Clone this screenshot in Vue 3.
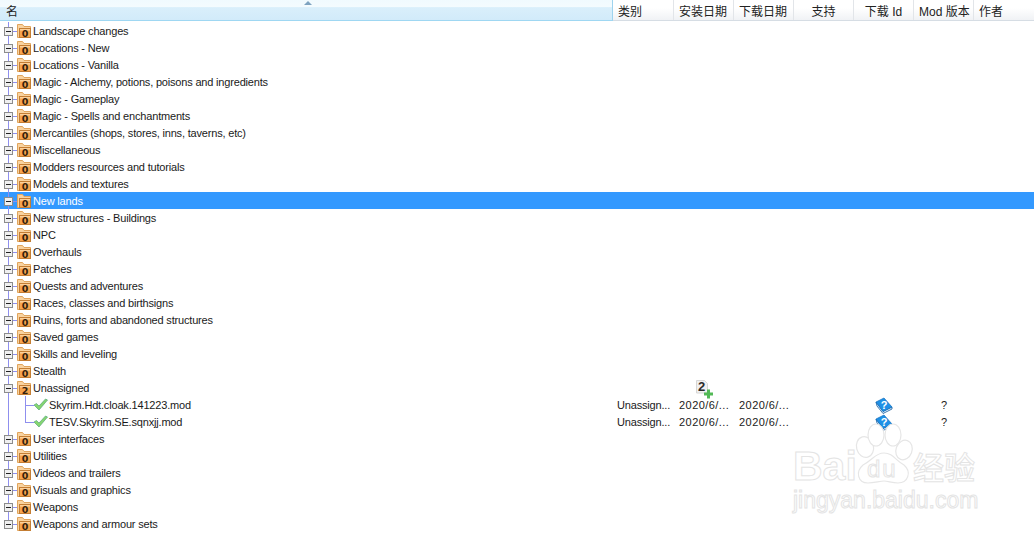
<script setup>
const names = ['Landscape changes','Locations - New','Locations - Vanilla','Magic - Alchemy, potions, poisons and ingredients','Magic - Gameplay','Magic - Spells and enchantments','Mercantiles (shops, stores, inns, taverns, etc)','Miscellaneous','Modders resources and tutorials','Models and textures','New lands','New structures - Buildings','NPC','Overhauls','Patches','Quests and adventures','Races, classes and birthsigns','Ruins, forts and abandoned structures','Saved games','Skills and leveling','Stealth','Unassigned','Skyrim.Hdt.cloak.141223.mod','TESV.Skyrim.SE.sqnxjj.mod','User interfaces','Utilities','Videos and trailers','Visuals and graphics','Weapons','Weapons and armour sets']
const mods = [22, 23]
const rows = names.map((name, i) => ({
  name,
  mod: mods.includes(i),
  lastMod: i === 23,
  selected: name === 'New lands',
  count: name === 'Unassigned' ? '2' : '0',
  addIcon: name === 'Unassigned',
  last: i === names.length - 1
}))
const cols = [
  { t: '类别', c: 'left' }, { t: '安装日期', c: 'left' }, { t: '下载日期', c: 'left' },
  { t: '支持', c: 'mid' }, { t: '下载 Id', c: 'mid' }, { t: 'Mod 版本', c: 'left' }, { t: '作者', c: 'left' }
]
</script>

<template>
  <div class="app">
    <div class="header">
      <div class="h-name">
        <span class="sort"></span>
        <span class="h-label">名</span>
      </div>
      <div v-for="col in cols" :key="col.t" class="h-col" :class="col.c">{{ col.t }}</div>
    </div>
    <div class="tree">
      <div v-for="r in rows" :key="r.name" class="row" :class="{ selected: r.selected, mod: r.mod }">
        <div class="name-cell">
          <template v-if="!r.mod">
            <span class="vline" :class="{ end: r.last }"></span>
            <span class="hline"></span>
            <span class="expander"></span>
            <svg class="folder" width="14" height="14" viewBox="0 0 14 14">
              <path d="M0.500 13.500V0.500h5l1.500 2h6.500v3H2.500v8z" fill="#f9d3a0" stroke="#e0a45c" />
              <rect x="2.500" y="4.500" width="11" height="9" fill="#f7a44e" stroke="#c47e34" />
              <rect x="3" y="5" width="10" height="1.500" fill="#fcd09a" />
              <text x="8" y="12.700" class="badge" text-anchor="middle">{{ r.count }}</text>
            </svg>
            <span class="label">{{ r.name }}</span>
          </template>
          <template v-else>
            <span class="vline"></span>
            <span class="mod-v" :class="{ end: r.lastMod }"></span>
            <span class="mod-h"></span>
            <svg class="check" width="15" height="13" viewBox="0 0 15 13">
              <path d="M1 7 L3.500 5.500 L6 8 L12.500 1 L14.500 2 L6 12 Z" fill="#86d66e" stroke="#62ad82" stroke-width="0.800" stroke-linejoin="round" />
            </svg>
            <span class="label mod-label">{{ r.name }}</span>
          </template>
        </div>
        <template v-if="r.mod">
          <div class="cell first">Unassign...</div>
          <div class="cell date">2020/6/...</div>
          <div class="cell date">2020/6/...</div>
          <div class="cell"></div>
          <div class="cell center">
            <svg width="18" height="17" viewBox="0 0 18 17">
              <path d="M1 5 L2 9 L8 16.500 L17 12 L17 10 L8 14.500 Z" fill="#e8f2fb" stroke="#0f5aa0" stroke-width="0.800" />
              <path d="M1 5 L9 1 L17 10 L8 14.500 Z" fill="#1e90e6" stroke="#1670bd" stroke-width="0.700" />
              <text x="9" y="11.500" class="q" text-anchor="middle">?</text>
            </svg>
          </div>
          <div class="cell center qmark">?</div>
          <div class="cell"></div>
        </template>
        <template v-else-if="r.addIcon">
          <div class="cell first"></div>
          <div class="cell add">
            <svg width="17" height="19" viewBox="0 0 17 19">
              <path d="M0.500 0.500h8l3 3v9.500h-11z" fill="#f0f0f0" stroke="#d6d6d6" />
              <text x="5.500" y="11" class="two" text-anchor="middle">2</text>
              <path d="M11 9.500h3v3h3v3h-3v3h-3v-3h-3v-3h3z" fill="#52b956" />
            </svg>
          </div>
        </template>
      </div>
    </div>
    <div class="watermark">
      <svg class="paw" width="64" height="66" viewBox="0 0 64 66">
        <g fill="#fff" stroke="#e6e6e6" stroke-width="1.200">
          <ellipse cx="13" cy="27" rx="8.500" ry="10.500" transform="rotate(-15 13 27)" />
          <ellipse cx="24" cy="15" rx="8" ry="11" />
          <ellipse cx="41" cy="15" rx="8" ry="11" />
          <ellipse cx="52" cy="30" rx="8" ry="10" transform="rotate(20 52 30)" />
          <path d="M32 33 C41 33 43 40 52 45 C60 52 56 63 46 63 C40 63 36 61 32 61 C28 61 22 63 16 63 C6 63 3 52 11 45 C21 40 23 33 32 33 Z" />
        </g>
      </svg>
      <div class="wm-top"><span class="wm-bai">Bai</span><span class="wm-du">du</span><span class="wm-cn">经验</span></div>
      <div class="wm-sub">jingyan.baidu.com</div>
    </div>
  </div>
</template>

<style>
html, body { margin: 0; background: #fff; }
</style>

<style scoped>
.app {
  position: relative;
  width: 1034px;
  height: 534px;
  overflow: hidden;
  background: #fff;
  font-family: "Liberation Sans", "Noto Sans CJK SC", sans-serif;
  font-size: 11px;
  letter-spacing: -0.18px;
  color: #1a1a1a;
}
.header {
  display: flex;
  height: 21px;
  box-sizing: border-box;
  border-bottom: 1px solid #d6dde4;
  background: linear-gradient(#fff 0, #fff 40%, #f0f2f5 100%);
  font-family: "Liberation Sans", "Noto Sans CJK SC", sans-serif;
  font-size: 12px;
  letter-spacing: 0;
  line-height: 24px;
  color: #222;
}
.h-name {
  position: relative;
  width: 613px;
  height: 21px;
  box-sizing: border-box;
  flex: none;
  padding-left: 6px;
  background: linear-gradient(#f0fafe 0, #f4fbfe 34%, #d9effb 38%, #d2ebfa 100%);
  border-right: 1px solid #9ed3ee;
  border-bottom: 1px solid #9fd7f2;
}
.sort {
  position: absolute;
  left: 304px;
  top: 1px;
  width: 0;
  height: 0;
  border-left: 4px solid transparent;
  border-right: 4px solid transparent;
  border-bottom: 4px solid #7ea3c0;
}
.h-col {
  width: 60px;
  flex: none;
  box-sizing: border-box;
  border-right: 1px solid #e2e5e9;
  white-space: nowrap;
}
.h-name + .h-col { width: 61px; }
.h-col.left { padding-left: 5px; }
.h-col.mid { text-align: center; }
.h-col:last-child { flex: 1; border-right: 0; }
.tree { padding-top: 1px; }
.row {
  display: grid;
  grid-template-columns: 613px 61px 60px 60px 60px 60px 60px 1fr;
  height: 17px;
  line-height: 19px;
}
.row.selected { background: #3399ff; color: #fff; }
.name-cell {
  position: relative;
  height: 17px;
  white-space: nowrap;
}
.vline {
  position: absolute;
  left: 8px;
  top: 0;
  height: 17px;
  width: 1px;
  background: #8f8fee;
}
.vline.end { height: 9px; }
.hline {
  position: absolute;
  left: 8px;
  top: 9px;
  width: 9px;
  height: 1px;
  background: #8f8fee;
}
.expander {
  position: absolute;
  left: 4px;
  top: 5px;
  width: 9px;
  height: 9px;
  box-sizing: border-box;
  border: 1px solid #8c8c8c;
  background: linear-gradient(#222, #222) no-repeat 1px 3px / 5px 1px, #f0f0f0;
}
.folder {
  position: absolute;
  left: 17px;
  top: 2px;
}
.badge {
  font-family: "DejaVu Sans", sans-serif;
  font-size: 9.500px;
  font-weight: 700;
  letter-spacing: 0;
  fill: #33220f;
}
.label { position: absolute; left: 33px; top: 0; }
.mod-label { left: 49px; }
.mod-v {
  position: absolute;
  left: 25px;
  top: 0;
  width: 1px;
  height: 17px;
  background: #8f8fee;
}
.mod-v.end { height: 9px; }
.mod-h {
  position: absolute;
  left: 25px;
  top: 9px;
  width: 9px;
  height: 1px;
  background: #8f8fee;
}
.check { position: absolute; left: 33px; top: 2px; }
.cell {
  padding-left: 5px;
  white-space: nowrap;
  position: relative;
}
.cell.first { padding-left: 4px; }
.cell.date { letter-spacing: 0.45px; }
.cell.center { padding: 0; text-align: center; }
.cell.center svg { display: block; margin: 1px auto 0; }
.cell.add { padding: 0; }
.cell.add svg { display: block; margin: 1px 0 0 22px; }
.q { font-family: "Liberation Sans", sans-serif; font-size: 11px; font-weight: 700; letter-spacing: 0; fill: #fff; }
.two { font-family: "Liberation Sans", sans-serif; font-size: 13px; font-weight: 700; letter-spacing: 0; fill: #2a2a2a; }
.qmark { padding-left: 1px; }
.watermark {
  position: absolute;
  left: 792px;
  top: 430px;
  width: 210px;
  height: 90px;
  color: #fff;
  letter-spacing: 0;
}
.paw { position: absolute; left: 60px; top: -10px; }
.wm-top {
  position: absolute;
  left: 0;
  top: 0;
  font-family: "Liberation Sans", sans-serif;
  font-weight: 700;
  -webkit-text-stroke: 1px #e4e4e4;
  white-space: nowrap;
}
.wm-bai { position: absolute; left: 1px; top: 16px; font-size: 41px; line-height: 40px; }
.wm-du { position: absolute; left: 75px; top: 27px; font-size: 24px; line-height: 24px; font-weight: 400; letter-spacing: 2px; }
.wm-cn { position: absolute; left: 121px; top: 16px; font-size: 31px; line-height: 40px; font-family: "Noto Sans CJK SC", sans-serif; font-weight: 500; }
.wm-sub {
  position: absolute;
  left: 1px;
  top: 57px;
  font-family: "Liberation Sans", sans-serif;
  font-size: 23px;
  line-height: 26px;
  -webkit-text-stroke: 1px #e4e4e4;
  white-space: nowrap;
}
</style>
